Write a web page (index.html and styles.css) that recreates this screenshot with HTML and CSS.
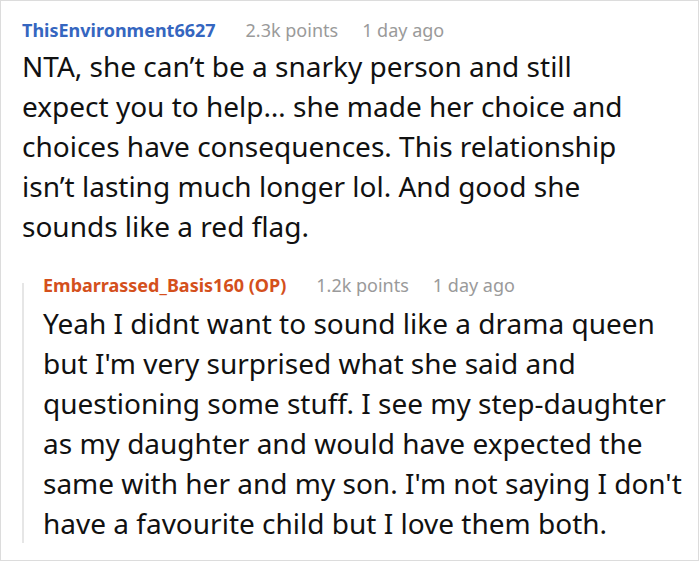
FILE: index.html
```html
<!DOCTYPE html>
<html>
<head>
<meta charset="utf-8">
<link rel="stylesheet" href="styles.css">
</head>
<body>
<div class="frame">
  <div class="comment">
    <div class="meta">
      <span class="user">ThisEnvironment6627</span>
      <span class="info">2.3k points</span>
      <span class="info">1 day ago</span>
    </div>
    <p class="text">NTA, she can’t be a snarky person and still expect you to help… she made her choice and choices have consequences. This relationship isn’t lasting much longer lol. And good she sounds like a red flag.</p>
  </div>
  <div class="reply">
    <div class="thread"></div>
    <div class="reply-body">
      <div class="meta">
        <span class="user op">Embarrassed_Basis160 (OP)</span>
        <span class="info">1.2k points</span>
        <span class="info">1 day ago</span>
      </div>
      <p class="text">Yeah I didnt want to sound like a drama queen but I'm very surprised what she said and questioning some stuff. I see my step-daughter as my daughter and would have expected the same with her and my son. I'm not saying I don't have a favourite child but I love them both.</p>
    </div>
  </div>
</div>
</body>
</html>
```

FILE: styles.css
```css
html, body {
  margin: 0;
  padding: 0;
  background: #ffffff;
}
.frame {
  box-sizing: border-box;
  width: 699px;
  height: 561px;
  border: 1px solid #dcdcdc;
  padding: 17px 8px 0 21px;
  font-family: "Noto Sans", "Open Sans", sans-serif;
  color: #111111;
  overflow: hidden;
}
.meta {
  display: flex;
  gap: 30px;
  font-size: 18px;
  line-height: 24px;
  white-space: nowrap;
}
.user {
  font-weight: 700;
  color: #3566c0;
}
.user.op {
  color: #d4501c;
}
.info {
  color: #9a9a9a;
}
.meta .info + .info {
  margin-left: -6px;
}
.text {
  margin: 4px 0 0 0;
  font-size: 28px;
  line-height: 40px;
}
.comment .text {
  margin-right: 28px;
}
.reply {
  display: flex;
  margin-top: 27px;
}
.thread {
  width: 2px;
  background: #e6e6e6;
  margin-top: 10px;
  flex: none;
}
.reply-body {
  flex: 1;
  padding-left: 19px;
}
.reply .text {
  margin-top: 6px;
}
```
